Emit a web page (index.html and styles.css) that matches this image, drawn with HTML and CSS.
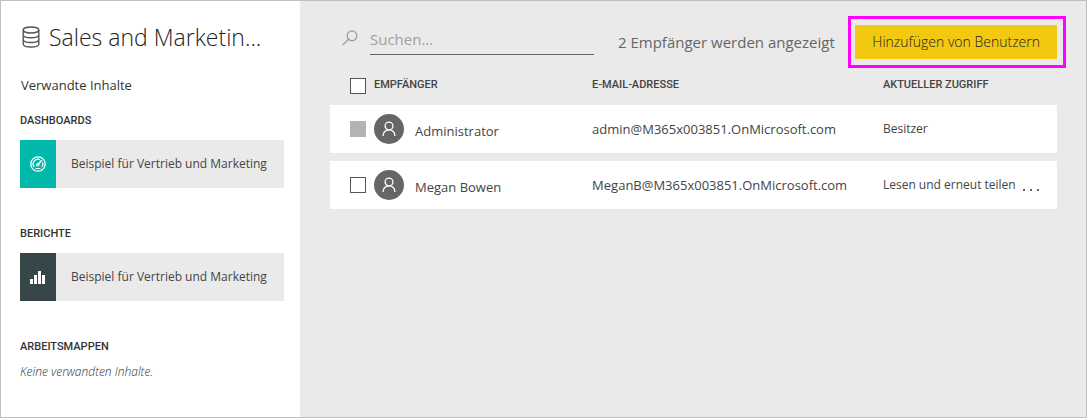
FILE: index.html
```html
<!DOCTYPE html>
<html lang="de">
<head>
<meta charset="utf-8">
<meta name="viewport" content="width=device-width, initial-scale=1">
<title>Sales and Marketing – Zugriff</title>
<link rel="stylesheet" href="styles.css">
</head>
<body class="page">
<aside class="sidebar">
  <h1 class="title">
    <svg class="title-icon" width="18" height="22" viewBox="0 0 18 22" fill="none" stroke="#555" stroke-width="1.4" aria-hidden="true">
      <ellipse cx="9" cy="4" rx="7.8" ry="3"/>
      <path d="M1.2 4v14c0 1.7 3.5 3 7.8 3s7.8-1.3 7.8-3V4M1.2 8.8c0 1.7 3.5 3 7.8 3s7.8-1.3 7.8-3M1.2 13.5c0 1.7 3.5 3 7.8 3s7.8-1.3 7.8-3"/>
    </svg>
    <span class="title-text">Sales and Marketin...</span>
  </h1>
  <p class="related">Verwandte Inhalte</p>
  <section class="group">
    <h2 class="group-title">DASHBOARDS</h2>
    <a class="tile" href="#">
      <span class="tile-icon tile-icon-dashboard">
        <svg width="16" height="16" viewBox="0 0 16 16" fill="none" stroke="#fff" aria-hidden="true">
          <circle cx="8" cy="8" r="7.2" stroke-width="1.3"/>
          <path d="M4.200 11A4.800 4.800 0 0 1 9.800 3.600M12.500 6.300a4.800 4.800 0 0 1-.7 4.700" stroke-width="1.2"/>
          <path d="M8 8.400l3.700-4.100" stroke-width="1.5"/>
          <circle cx="7.800" cy="8.700" r="1.200" stroke-width="1.100"/>
          <path d="M5.500 12.500h5" stroke-width="1"/>
        </svg>
      </span>
      <span class="tile-label">Beispiel für Vertrieb und Marketing</span>
    </a>
  </section>
  <section class="group">
    <h2 class="group-title">BERICHTE</h2>
    <a class="tile" href="#">
      <span class="tile-icon tile-icon-report">
        <svg width="16" height="14" viewBox="0 0 16 14" fill="#fff" aria-hidden="true">
          <path d="M0 9h3v5H0zM4 5h3v9H4zM8 1h3v13H8zM12 5h3v9h-3z"/>
        </svg>
      </span>
      <span class="tile-label">Beispiel für Vertrieb und Marketing</span>
    </a>
  </section>
  <section class="group">
    <h2 class="group-title">ARBEITSMAPPEN</h2>
    <p class="empty">Keine verwandten Inhalte.</p>
  </section>
</aside>
<main class="main">
  <div class="toolbar">
    <label class="search">
      <svg class="search-icon" width="16" height="16" viewBox="0 0 16 16" fill="none" stroke="#999" stroke-width="1.2" aria-hidden="true">
        <circle cx="10" cy="5.8" r="4.9"/>
        <path d="M6.4 9.3L.6 15.2"/>
      </svg>
      <input class="search-input" type="text" placeholder="Suchen..." aria-label="Suchen">
    </label>
    <p class="count">2 Empfänger werden angezeigt</p>
    <div class="highlight">
      <button class="add" type="button">Hinzufügen von Benutzern</button>
    </div>
  </div>
  <table class="users">
    <colgroup>
      <col class="col-check"><col class="col-name"><col class="col-mail"><col class="col-access"><col class="col-more">
    </colgroup>
    <thead>
      <tr class="head-row">
        <th class="check-cell"><input class="check" type="checkbox" aria-label="Alle auswählen"></th>
        <th>EMPFÄNGER</th>
        <th>E-MAIL-ADRESSE</th>
        <th colspan="2">AKTUELLER ZUGRIFF</th>
      </tr>
    </thead>
    <tbody>
      <tr class="row">
        <td class="check-cell"><input class="check" type="checkbox" aria-label="Administrator auswählen" disabled></td>
        <td>
          <div class="person">
            <span class="avatar">
              <svg width="14" height="16" viewBox="0 0 14 16" fill="none" stroke="#fff" stroke-width="1.3" aria-hidden="true">
                <circle cx="7" cy="5" r="3.9"/><path d="M1 15c.3-3.6 2.6-6.1 6-6.1s5.7 2.5 6 6.1"/>
              </svg>
            </span>
            <span class="person-name">Administrator</span>
          </div>
        </td>
        <td>admin@M365x003851.OnMicrosoft.com</td>
        <td class="access">Besitzer</td>
        <td></td>
      </tr>
      <tr class="row">
        <td class="check-cell"><input class="check" type="checkbox" aria-label="Megan Bowen auswählen"></td>
        <td>
          <div class="person">
            <span class="avatar">
              <svg width="14" height="16" viewBox="0 0 14 16" fill="none" stroke="#fff" stroke-width="1.3" aria-hidden="true">
                <circle cx="7" cy="5" r="3.9"/><path d="M1 15c.3-3.6 2.6-6.1 6-6.1s5.7 2.5 6 6.1"/>
              </svg>
            </span>
            <span class="person-name">Megan Bowen</span>
          </div>
        </td>
        <td>MeganB@M365x003851.OnMicrosoft.com</td>
        <td class="access">Lesen und erneut teilen</td>
        <td>
          <button class="more" type="button" aria-label="Weitere Optionen">
            <svg width="16" height="2" viewBox="0 0 16 2" fill="#7a5a50" aria-hidden="true"><path d="M0 0h2v2H0zM7 0h2v2H7zM14 0h2v2h-2z"/></svg>
          </button>
        </td>
      </tr>
    </tbody>
  </table>
</main>
</body>
</html>
```
FILE: styles.css
```css
* {
  box-sizing: border-box;
}

.page {
  display: flex;
  min-height: 100vh;
  margin: 0;
  border: 1px solid #c0c0c0;
  background: #eaeaea;
  color: #333;
  font-family: "Open Sans", "Noto Sans", sans-serif;
  font-size: 13px;
  line-height: 20px;
}

.sidebar {
  flex: 0 0 299px;
  padding: 20px 16px 20px 19px;
  background: #fff;
}

.title {
  display: flex;
  align-items: center;
  gap: 9px;
  margin: 0;
  padding-left: 2px;
  color: #222;
  font-size: 23px;
  font-weight: 300;
  line-height: 32px;
  white-space: nowrap;
}

.related {
  margin: 22px 0 17px;
  padding-left: 1px;
}

.group {
  margin-bottom: 36px;
}

.group:last-child {
  margin-bottom: 0;
}

.group-title {
  margin: 0 0 10px;
  font-family: Roboto, sans-serif;
  font-size: 11px;
  font-weight: 500;
  line-height: 18px;
}

.tile {
  display: flex;
  height: 48px;
  margin-bottom: 37px;
  background: #eaeaea;
  color: #444;
  text-decoration: none;
}

.tile-icon {
  display: flex;
  flex: 0 0 36px;
  align-items: center;
  justify-content: center;
}

.tile-icon-dashboard {
  background: #01b8aa;
}

.tile-icon-report {
  background: #374649;
}

.tile-label {
  align-self: center;
  padding-left: 15px;
  font-size: 12px;
  white-space: nowrap;
}

.empty {
  margin: -4px 0 0;
  color: #333;
  font-size: 12px;
  font-style: italic;
  font-weight: 300;
}

.main {
  flex: 1;
  min-width: 0;
  padding: 15px 20px 20px 30px;
}

.toolbar {
  display: flex;
  align-items: center;
}

.search {
  display: flex;
  align-items: flex-start;
  gap: 12px;
  padding: 0 0 6px 12px;
}

.search-icon {
  margin-top: 7px;
}

.search-input {
  width: 224px;
  height: 32px;
  padding: 0;
  border: 0;
  border-bottom: 1px solid #666;
  border-radius: 0;
  background: transparent;
  color: #333;
  font: inherit;
  font-size: 15px;
}

.search-input::placeholder {
  color: #a0a0a0;
  opacity: 1;
}

.count {
  margin: 0 0 0 24px;
  color: #666;
  font-size: 15px;
  white-space: nowrap;
}

.highlight {
  margin-left: auto;
  padding: 6px 6px 6px 4px;
  border: 3px solid #f0f;
}

.add {
  display: block;
  height: 34px;
  padding: 0 17px;
  border: 0;
  background: #f2c811;
  color: #222;
  font: inherit;
  font-size: 14px;
  font-weight: 300;
  white-space: nowrap;
}

.users {
  width: calc(100% - 9px);
  border-spacing: 0 8px;
  table-layout: fixed;
}

.col-check {
  width: 44px;
}

.col-name {
  width: 30%;
}

.col-mail {
  width: 40%;
}

.col-access {
  width: 139px;
}

.col-more {
  width: 35px;
}

.head-row th {
  height: 21px;
  padding: 0 0 4px;
  color: #444;
  font-family: Roboto, sans-serif;
  font-size: 11px;
  font-weight: 500;
  line-height: 16px;
  text-align: left;
}

.head-row .check-cell {
  padding: 2px 0 3px 20px;
}

.check {
  display: block;
  width: 16px;
  height: 16px;
  margin: 0;
  border: 1px solid #555;
  background: #fff;
  appearance: none;
}

.check:disabled {
  border-color: #b3b3b3;
  background: #b3b3b3;
}

.row td {
  height: 48px;
  padding: 0;
  background: #fff;
  color: #444;
  white-space: nowrap;
}

.row .check-cell {
  padding-left: 20px;
}

.person {
  display: flex;
  align-items: center;
  gap: 11px;
}

.person-name {
  padding-top: 3px;
}

.avatar {
  display: flex;
  align-items: center;
  justify-content: center;
  width: 30px;
  height: 30px;
  border-radius: 50%;
  background: #666;
}

.row .access {
  font-size: 12px;
}

.more {
  display: flex;
  align-items: flex-end;
  height: 12px;
  padding: 0 0 0 1px;
  border: 0;
  background: transparent;
}
```
